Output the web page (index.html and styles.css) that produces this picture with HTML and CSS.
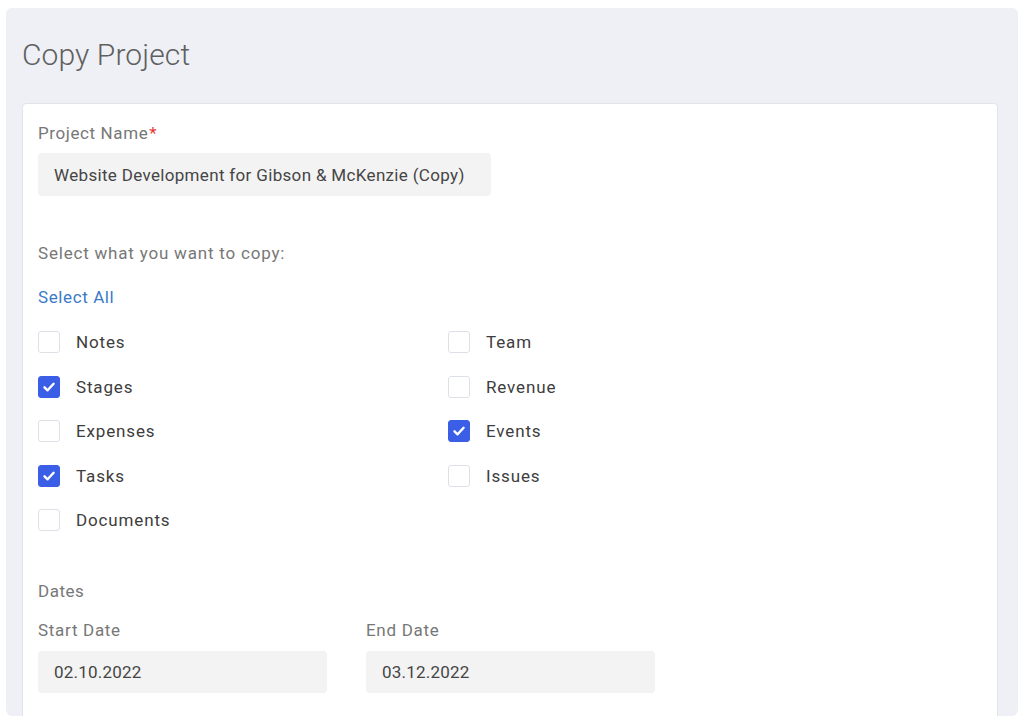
FILE: index.html
```html
<!DOCTYPE html>
<html>
<head>
<meta charset="utf-8">
<link rel="stylesheet" href="styles.css">
</head>
<body>
<div class="panel">
  <h1 class="title">Copy Project</h1>
  <div class="card">
    <div class="label">Project Name<span class="req">*</span></div>
    <div class="input wide">Website Development for Gibson &amp; McKenzie (Copy)</div>
    <div class="section">Select what you want to copy:</div>
    <div class="link">Select All</div>
    <div class="checks">
      <div class="check"><span class="box"></span>Notes</div>
      <div class="check"><span class="box"></span>Team</div>
      <div class="check"><span class="box on"><svg viewBox="0 0 22 22" width="22" height="22"><path d="M6.5 11.3 L9.6 14.3 L15.6 7.8" fill="none" stroke="#fff" stroke-width="2.4" stroke-linecap="round" stroke-linejoin="round"/></svg></span>Stages</div>
      <div class="check"><span class="box"></span>Revenue</div>
      <div class="check"><span class="box"></span>Expenses</div>
      <div class="check"><span class="box on"><svg viewBox="0 0 22 22" width="22" height="22"><path d="M6.5 11.3 L9.6 14.3 L15.6 7.8" fill="none" stroke="#fff" stroke-width="2.4" stroke-linecap="round" stroke-linejoin="round"/></svg></span>Events</div>
      <div class="check"><span class="box on"><svg viewBox="0 0 22 22" width="22" height="22"><path d="M6.5 11.3 L9.6 14.3 L15.6 7.8" fill="none" stroke="#fff" stroke-width="2.4" stroke-linecap="round" stroke-linejoin="round"/></svg></span>Tasks</div>
      <div class="check"><span class="box"></span>Issues</div>
      <div class="check"><span class="box"></span>Documents</div>
    </div>
    <div class="section dates">Dates</div>
    <div class="date-row">
      <div class="date-field">
        <div class="label">Start Date</div>
        <div class="input">02.10.2022</div>
      </div>
      <div class="date-field">
        <div class="label">End Date</div>
        <div class="input">03.12.2022</div>
      </div>
    </div>
  </div>
</div>
</body>
</html>
```
FILE: styles.css
```css
html, body {
  margin: 0;
  padding: 0;
  background: #fff;
}
body {
  font-family: Roboto, "Liberation Sans", sans-serif;
  padding: 8px 6px 0 6px;
}
.panel {
  background: #eef0f5;
  border-radius: 6px;
  padding: 0 20px 0 16px;
  height: 708px;
  overflow: hidden;
  box-sizing: border-box;
}
.title {
  margin: 0;
  padding-top: 29px;
  height: 95px;
  box-sizing: border-box;
  font-size: 30px;
  font-weight: 300;
  line-height: 36px;
  color: #5f5f5f;
  letter-spacing: 0.1px;
}
.card {
  background: #fff;
  border: 1px solid #e1e3e8;
  border-radius: 4px;
  padding: 19px 15px 40px 15px;
  min-height: 660px;
}
.label {
  font-size: 17px;
  line-height: 20px;
  color: #777;
  letter-spacing: 0.6px;
}
.req {
  color: #e53935;
  margin-left: 1px;
}
.input {
  margin-top: 10px;
  background: #f3f3f3;
  border-radius: 4px;
  height: 43px;
  box-sizing: border-box;
  padding: 0 16px;
  display: flex;
  align-items: center;
  font-size: 17px;
  color: #454545;
  letter-spacing: 0.33px;
}
.input.wide {
  width: 453px;
}
.section {
  margin-top: 47px;
  font-size: 17px;
  line-height: 20px;
  color: #777;
  letter-spacing: 0.8px;
}
.link {
  margin-top: 24px;
  font-size: 17px;
  line-height: 20px;
  color: #3a7bc8;
  letter-spacing: 0.6px;
}
.checks {
  margin-top: 23px;
  display: grid;
  grid-template-columns: 410px 410px;
  row-gap: 20.5px;
}
.check {
  display: flex;
  align-items: center;
  height: 24px;
  font-size: 17px;
  color: #3d3d3d;
  letter-spacing: 0.85px;
}
.box {
  width: 22px;
  height: 22px;
  box-sizing: border-box;
  border: 1px solid #dde1e7;
  border-radius: 3px;
  margin-right: 16px;
  flex: none;
  display: block;
  position: relative;
  overflow: hidden;
}
.box.on {
  background: #3b5ee6;
  border-color: #3b5ee6;
}
.box svg {
  position: absolute;
  left: -1px;
  top: -1px;
}
.section.dates {
  margin-top: 49px;
  letter-spacing: 0.5px;
}
.date-row {
  margin-top: 19px;
  display: flex;
  gap: 39px;
}
.date-field {
  width: 289px;
}
.date-field .label {
  letter-spacing: 0.7px;
}
.date-field .input {
  height: 42px;
  margin-top: 11px;
  letter-spacing: 0.2px;
}
```
